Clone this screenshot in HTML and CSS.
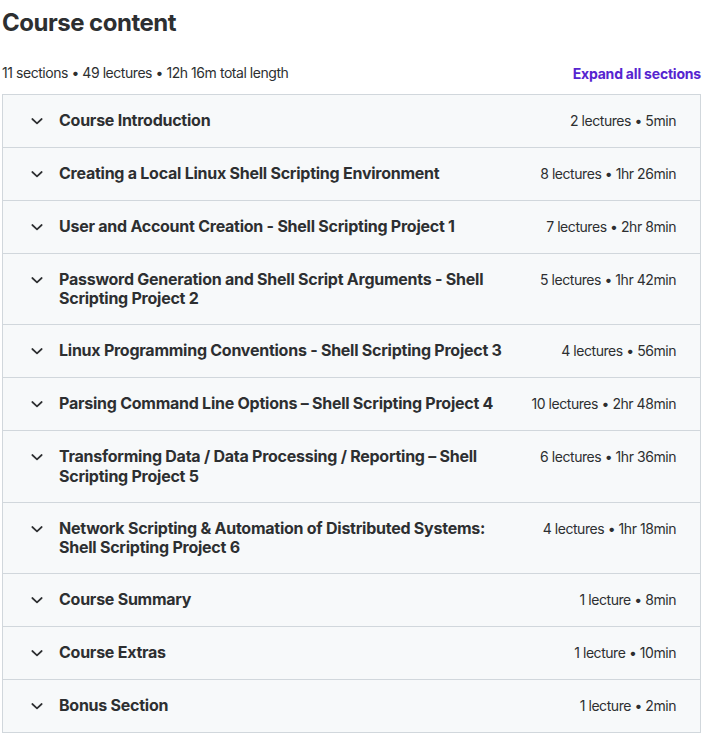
FILE: index.html
```html
<!DOCTYPE html>
<html lang="en">
<head>
<meta charset="utf-8">
<title>Course content</title>
<link rel="stylesheet" href="styles.css">
</head>
<body>
<div class="wrap">
  <h2 class="title">Course content</h2>
  <div class="summary">
    <span class="summary-text">11 sections • 49 lectures • 12h 16m total length</span>
    <button class="expand">Expand all sections</button>
  </div>
  <div class="sections">
    <div class="section">
      <svg class="chev" viewBox="0 0 20 20"><path d="M5.3 8l4.7 4.3L14.7 8" /></svg>
      <span class="sec-title">Course Introduction</span>
      <span class="sec-meta">2 lectures • 5min</span>
    </div>
    <div class="section">
      <svg class="chev" viewBox="0 0 20 20"><path d="M5.3 8l4.7 4.3L14.7 8" /></svg>
      <span class="sec-title">Creating a Local Linux Shell Scripting Environment</span>
      <span class="sec-meta">8 lectures • 1hr 26min</span>
    </div>
    <div class="section">
      <svg class="chev" viewBox="0 0 20 20"><path d="M5.3 8l4.7 4.3L14.7 8" /></svg>
      <span class="sec-title">User and Account Creation - Shell Scripting Project 1</span>
      <span class="sec-meta">7 lectures • 2hr 8min</span>
    </div>
    <div class="section">
      <svg class="chev" viewBox="0 0 20 20"><path d="M5.3 8l4.7 4.3L14.7 8" /></svg>
      <span class="sec-title">Password Generation and Shell Script Arguments - Shell Scripting Project 2</span>
      <span class="sec-meta">5 lectures • 1hr 42min</span>
    </div>
    <div class="section">
      <svg class="chev" viewBox="0 0 20 20"><path d="M5.3 8l4.7 4.3L14.7 8" /></svg>
      <span class="sec-title">Linux Programming Conventions - Shell Scripting Project 3</span>
      <span class="sec-meta">4 lectures • 56min</span>
    </div>
    <div class="section">
      <svg class="chev" viewBox="0 0 20 20"><path d="M5.3 8l4.7 4.3L14.7 8" /></svg>
      <span class="sec-title">Parsing Command Line Options – Shell Scripting Project 4</span>
      <span class="sec-meta">10 lectures • 2hr 48min</span>
    </div>
    <div class="section">
      <svg class="chev" viewBox="0 0 20 20"><path d="M5.3 8l4.7 4.3L14.7 8" /></svg>
      <span class="sec-title">Transforming Data / Data Processing / Reporting – Shell Scripting Project 5</span>
      <span class="sec-meta">6 lectures • 1hr 36min</span>
    </div>
    <div class="section">
      <svg class="chev" viewBox="0 0 20 20"><path d="M5.3 8l4.7 4.3L14.7 8" /></svg>
      <span class="sec-title">Network Scripting &amp; Automation of Distributed Systems: Shell Scripting Project 6</span>
      <span class="sec-meta">4 lectures • 1hr 18min</span>
    </div>
    <div class="section">
      <svg class="chev" viewBox="0 0 20 20"><path d="M5.3 8l4.7 4.3L14.7 8" /></svg>
      <span class="sec-title">Course Summary</span>
      <span class="sec-meta">1 lecture • 8min</span>
    </div>
    <div class="section">
      <svg class="chev" viewBox="0 0 20 20"><path d="M5.3 8l4.7 4.3L14.7 8" /></svg>
      <span class="sec-title">Course Extras</span>
      <span class="sec-meta">1 lecture • 10min</span>
    </div>
    <div class="section">
      <svg class="chev" viewBox="0 0 20 20"><path d="M5.3 8l4.7 4.3L14.7 8" /></svg>
      <span class="sec-title">Bonus Section</span>
      <span class="sec-meta">1 lecture • 2min</span>
    </div>
  </div>
</div>
</body>
</html>
```
FILE: styles.css
```css
* { box-sizing: border-box; }
html, body { margin: 0; padding: 0; background: #fff; }
body {
  font-family: Inter, "Noto Sans", "Liberation Sans", sans-serif;
  color: #2d2f31;
}
.wrap {
  padding: 8px 2px 0 2px;
}
.title {
  margin: 0 0 26px 0;
  font-size: 24px;
  line-height: 29px;
  font-weight: 700;
  letter-spacing: -0.5px;
}
.summary {
  display: flex;
  justify-content: space-between;
  align-items: center;
  height: 20px;
  margin-bottom: 11px;
}
.summary-text {
  font-size: 14px;
  line-height: 20px;
  letter-spacing: -0.45px;
}
.expand {
  border: 0;
  background: none;
  padding: 0;
  margin-top: 1px;
  font-family: inherit;
  font-size: 14px;
  font-weight: 700;
  color: #5624d0;
  letter-spacing: -0.2px;
  cursor: pointer;
}
.sections {
  border: 1px solid #d1d7dc;
  border-bottom: 0;
}
.section {
  display: flex;
  align-items: flex-start;
  gap: 12px;
  padding: 16px 24px;
  background: #f7f9fa;
  border-bottom: 1px solid #d1d7dc;
}
.chev {
  flex: none;
  width: 20px;
  height: 20px;
  fill: none;
  stroke: #2d2f31;
  stroke-width: 1.7;
  stroke-linecap: round;
  stroke-linejoin: round;
}
.sec-title {
  flex: 1;
  font-size: 16px;
  font-weight: 700;
  line-height: 19.2px;
  letter-spacing: -0.25px;
  margin-right: 8px;
}
.sec-meta {
  flex: none;
  font-size: 14px;
  line-height: 20px;
  letter-spacing: -0.45px;
}
```
